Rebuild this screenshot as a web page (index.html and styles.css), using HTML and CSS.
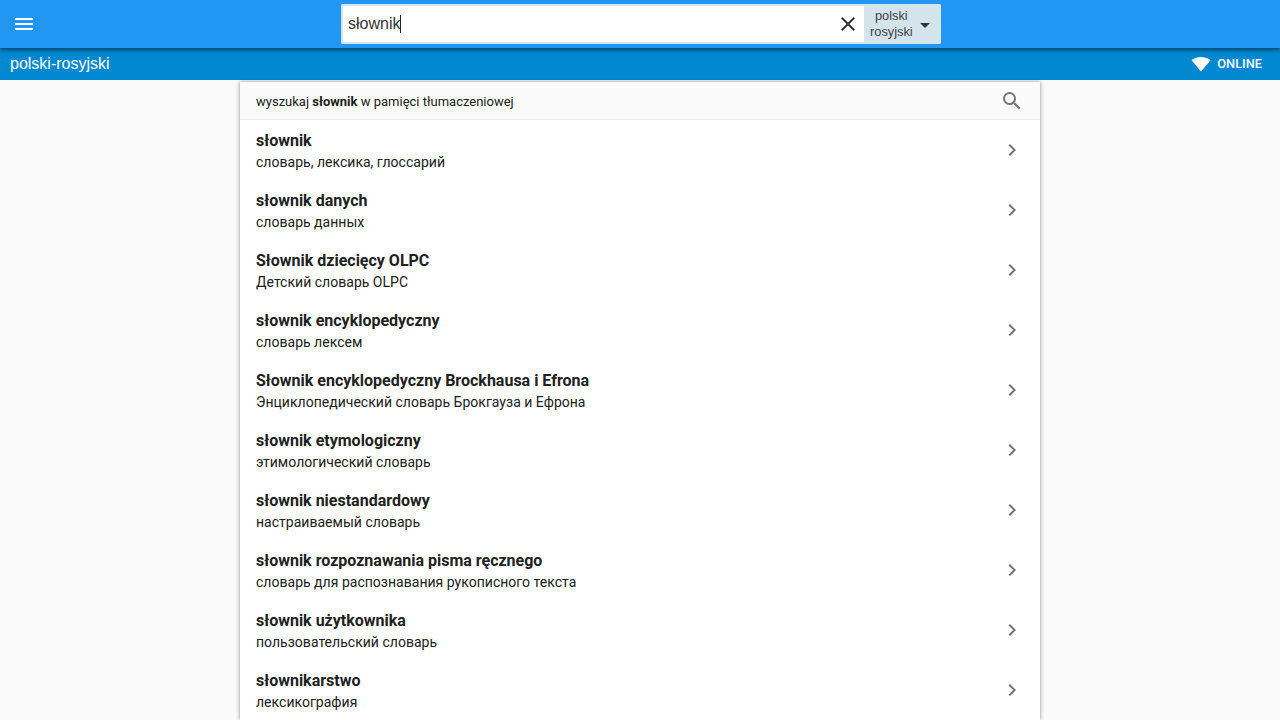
FILE: index.html
```html
<!DOCTYPE html>
<html lang="pl">
<head>
<meta charset="utf-8">
<title>słownik</title>
<link rel="stylesheet" href="styles.css">
</head>
<body>
<header class="toolbar">
  <button class="menu-btn" aria-label="menu">
    <svg width="24" height="24" viewBox="0 0 24 24"><path fill="#fff" d="M3 18h18v-2H3v2zm0-5h18v-2H3v2zm0-7v2h18V6H3z"/></svg>
  </button>
  <div class="search">
    <div class="search-input"><span>słownik</span><i class="caret"></i></div>
    <svg class="clear" width="24" height="24" viewBox="0 0 24 24"><path fill="#333" d="M19 6.41 17.59 5 12 10.59 6.41 5 5 6.41 10.59 12 5 17.59 6.41 19 12 13.41 17.59 19 19 17.59 13.41 12z"/></svg>
    <div class="lang">
      <div class="lang-names"><span>polski</span><span>rosyjski</span></div>
      <i class="lang-arrow"></i>
    </div>
  </div>
</header>
<div class="subbar">
  <span class="subbar-title">polski-rosyjski</span>
  <div class="status">
    <svg width="20" height="20" viewBox="0 0 24 24"><path fill="#fff" d="M12 21 .6 7.4C1.1 7 5.4 3.5 12 3.5S22.900 7 23.400 7.400z"/></svg>
    <span>ONLINE</span>
  </div>
</div>
<main class="panel">
  <div class="tm-row">
    <span>wyszukaj <b>słownik</b> w pamięci tłumaczeniowej</span>
    <svg width="24" height="24" viewBox="0 0 24 24"><path fill="#757575" d="M15.500 14h-.79l-.28-.27A6.470 6.470 0 0 0 16 9.500 6.500 6.500 0 1 0 9.500 16c1.610 0 3.090-.59 4.230-1.570l.27.28v.79l5 4.990L20.490 19l-4.990-5zm-6 0C7.010 14 5 11.990 5 9.500S7.010 5 9.500 5 14 7.010 14 9.500 11.990 14 9.500 14z"/></svg>
  </div>
  <ul class="results">
    <li><div><b>słownik</b><span>словарь, лексика, глоссарий</span></div><svg class="chev" width="24" height="24" viewBox="0 0 24 24"><path d="M10 6 8.590 7.410 13.170 12l-4.580 4.590L10 18l6-6z"/></svg></li>
    <li><div><b>słownik danych</b><span>словарь данных</span></div><svg class="chev" width="24" height="24" viewBox="0 0 24 24"><path d="M10 6 8.590 7.410 13.170 12l-4.580 4.590L10 18l6-6z"/></svg></li>
    <li><div><b>Słownik dziecięcy OLPC</b><span>Детский словарь OLPC</span></div><svg class="chev" width="24" height="24" viewBox="0 0 24 24"><path d="M10 6 8.590 7.410 13.170 12l-4.580 4.590L10 18l6-6z"/></svg></li>
    <li><div><b>słownik encyklopedyczny</b><span>словарь лексем</span></div><svg class="chev" width="24" height="24" viewBox="0 0 24 24"><path d="M10 6 8.590 7.410 13.170 12l-4.580 4.590L10 18l6-6z"/></svg></li>
    <li><div><b>Słownik encyklopedyczny Brockhausa i Efrona</b><span>Энциклопедический словарь Брокгауза и Ефрона</span></div><svg class="chev" width="24" height="24" viewBox="0 0 24 24"><path d="M10 6 8.590 7.410 13.170 12l-4.580 4.590L10 18l6-6z"/></svg></li>
    <li><div><b>słownik etymologiczny</b><span>этимологический словарь</span></div><svg class="chev" width="24" height="24" viewBox="0 0 24 24"><path d="M10 6 8.590 7.410 13.170 12l-4.580 4.590L10 18l6-6z"/></svg></li>
    <li><div><b>słownik niestandardowy</b><span>настраиваемый словарь</span></div><svg class="chev" width="24" height="24" viewBox="0 0 24 24"><path d="M10 6 8.590 7.410 13.170 12l-4.580 4.590L10 18l6-6z"/></svg></li>
    <li><div><b>słownik rozpoznawania pisma ręcznego</b><span>словарь для распознавания рукописного текста</span></div><svg class="chev" width="24" height="24" viewBox="0 0 24 24"><path d="M10 6 8.590 7.410 13.170 12l-4.580 4.590L10 18l6-6z"/></svg></li>
    <li><div><b>słownik użytkownika</b><span>пользовательский словарь</span></div><svg class="chev" width="24" height="24" viewBox="0 0 24 24"><path d="M10 6 8.590 7.410 13.170 12l-4.580 4.590L10 18l6-6z"/></svg></li>
    <li><div><b>słownikarstwo</b><span>лексикография</span></div><svg class="chev" width="24" height="24" viewBox="0 0 24 24"><path d="M10 6 8.590 7.410 13.170 12l-4.580 4.590L10 18l6-6z"/></svg></li>
  </ul>
</main>
</body>
</html>
```
FILE: styles.css
```css
* { box-sizing: border-box; }
html, body { margin: 0; height: 720px; overflow: hidden; }
body {
  background: #fafafa;
  font-family: Roboto, sans-serif;
  color: #212121;
}
svg { display: block; flex: none; }

.toolbar {
  position: relative;
  z-index: 2;
  height: 48px;
  background: #2196f3;
  box-shadow: 0 2px 4px rgba(0,0,0,.5);
  display: flex;
  justify-content: center;
  align-items: center;
}
.menu-btn {
  position: absolute;
  left: 12px;
  top: 12px;
  width: 24px;
  height: 24px;
  padding: 0;
  border: 0;
  background: none;
}
.search {
  width: 600px;
  height: 40px;
  margin-left: 2px;
  border: 2px solid #d3e4ec;
  border-right: 0;
  border-radius: 2px;
  background: #fff;
  display: flex;
  align-items: center;
}
.search-input {
  flex: 1;
  padding-left: 5px;
  display: flex;
  align-items: center;
  font-family: "Liberation Sans", sans-serif;
  font-size: 16px;
  color: #333;
}
.caret { width: 1px; height: 18px; background: #212121; }
.clear { margin-right: 4px; }
.lang {
  width: 77px;
  height: 40px;
  margin: -2px 0;
  background: #d3e4ec;
  border-radius: 0 2px 2px 0;
  display: flex;
  align-items: center;
  padding-left: 6px;
  font-family: "Liberation Sans", sans-serif;
  font-size: 12.800px;
  line-height: 16px;
  color: #424242;
}
.lang-names { display: flex; flex-direction: column; align-items: center; }
.lang-arrow {
  margin-left: 7px;
  margin-top: 2px;
  border: 5px solid transparent;
  border-top-color: #333;
  border-bottom: 0;
}

.subbar {
  height: 32px;
  background: #0288d1;
  color: #fff;
  display: flex;
  justify-content: space-between;
  align-items: center;
  padding: 0 18px 0 10px;
}
.subbar-title { font-family: "Liberation Sans", sans-serif; font-size: 16px; }
.status { display: flex; align-items: center; gap: 6px; font-size: 12.800px; font-weight: 500; }
.status span { margin-top: -2px; }

.panel {
  width: 800px;
  margin: 2px auto 0;
  background: #fff;
  box-shadow: 0 0 4px rgba(0,0,0,.45);
}
.tm-row {
  height: 38px;
  padding: 1px 16px 0;
  background: #fafafa;
  border-bottom: 1px solid #eee;
  display: flex;
  justify-content: space-between;
  align-items: center;
  font-size: 13px;
}
.tm-row svg { margin-top: -1px; }
.tm-row b { font-weight: 700; }
.results { list-style: none; margin: 0; padding: 0; }
.results li {
  height: 60px;
  padding: 0 16px;
  display: flex;
  justify-content: space-between;
  align-items: center;
}
.results li div { display: flex; flex-direction: column; padding-top: 2px; }
.results b { font-size: 16px; font-weight: 700; line-height: 22px; }
.results span { font-size: 14px; line-height: 20px; letter-spacing: .02px; }
.chev { fill: #757575; }
```
